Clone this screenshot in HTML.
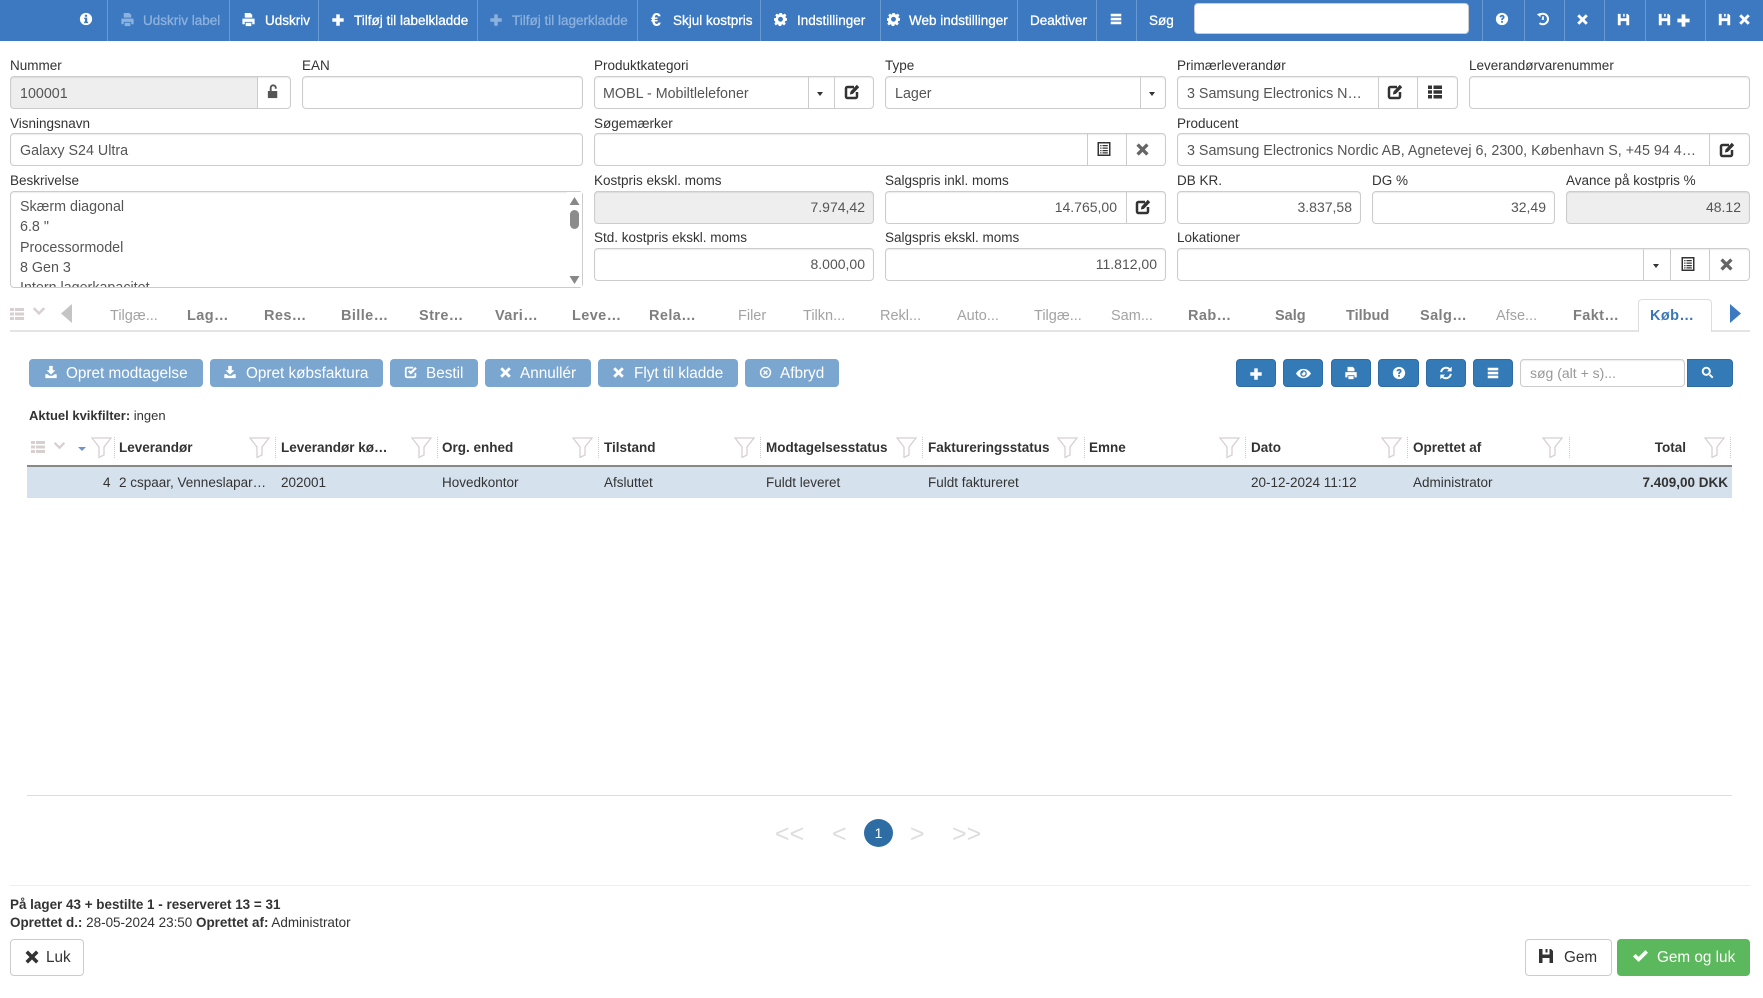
<!DOCTYPE html>
<html lang="da"><head><meta charset="utf-8"><title>Galaxy S24 Ultra</title>
<style>
*{box-sizing:border-box}
html,body{margin:0;padding:0;background:#fff}
body{width:1763px;height:998px;position:relative;overflow:hidden;font-family:"Liberation Sans",Arial,sans-serif;font-size:13.5px;color:#333}
.a,.t,.l,.b,.s,.sep,.btn,.rb,svg.a{position:absolute}
svg{fill:currentColor}
.t{white-space:nowrap;line-height:20px;height:20px}
.l{white-space:nowrap;line-height:20px;height:20px;font-size:13.5px;color:#333}
.b{height:33px;border:1px solid #ccc;border-radius:4px;box-shadow:inset 0 1px 1px rgba(0,0,0,.075);background:#fff;font-size:14.3px;color:#555;line-height:31px;padding:0 9px;white-space:nowrap;overflow:hidden}
.u{line-height:34px}
.r{text-align:right;padding-right:8px;font-size:14px}
.g{background:#eee}
.s{width:1px;background:#ccc}
.sep{top:0;width:1px;height:41px;background:#6a9ad2}
#top{position:absolute;left:0;top:0;width:1763px;height:41px;background:#3c79c1}
#top .t{color:#fff;top:11px;font-size:13.5px;-webkit-text-stroke:.3px #fff}
#top .d{color:#8db1dd;-webkit-text-stroke:.3px #8db1dd}
#top svg{color:#fff}
.tab{position:absolute;top:305px;font-size:14.5px;color:#a3a3a3;line-height:22px;white-space:nowrap}
.tab.k{font-weight:bold;color:#7f7f7f;letter-spacing:.4px}
.btn{top:359px;height:28px;background:#7ba6cf;border-radius:4px}
.bt{position:absolute;top:364px;color:#fff;font-size:15.3px;line-height:20px;white-space:nowrap}
.rb{top:359px;height:28px;background:#337ab7;border-radius:4px;border:1px solid #2e6da4}
.h{position:absolute;top:438px;font-weight:bold;font-size:13.5px;line-height:20px;white-space:nowrap;color:#333}
.c{position:absolute;top:473px;font-size:13.5px;line-height:20px;white-space:nowrap;color:#333}
.dot{position:absolute;top:437px;height:21px;width:0;border-left:1px dotted #c9c9c9}
.f{position:absolute;top:437px;width:21px;height:21px;fill:none;stroke:#d8d0d0;stroke-width:1.3}
.car{position:absolute;width:0;height:0;border-left:3.5px solid transparent;border-right:3.5px solid transparent;border-top:4.5px solid #333}
.pg{position:absolute;top:819px;font-size:25px;line-height:30px;color:#ddd;white-space:nowrap}
.ft{position:absolute;top:939px;height:37px;border-radius:4px;font-size:15.3px;line-height:35px;white-space:nowrap}
</style></head><body>
<svg width="0" height="0" style="position:absolute">
<defs>
<symbol id="info" viewBox="0 0 16 16"><path fill-rule="evenodd" d="M8 1a7 7 0 1 0 0 14A7 7 0 0 0 8 1zM6.7 3.2h2.6v2.2H6.700zM6 6.400h3.400v4.700h1v1.600H5.800v-1.600h1V8H6z"/></symbol>
<symbol id="q" viewBox="0 0 16 16"><path fill-rule="evenodd" d="M8 1a7 7 0 1 0 0 14A7 7 0 0 0 8 1zM5.200 6C5.200 4.300 6.600 3.300 8.100 3.300s2.800.9 2.800 2.500c0 1.900-1.900 2-1.900 3.300H7c0-2.200 1.800-2.300 1.800-3.300 0-.4-.3-.7-.7-.7-.5 0-.8.300-.8.900zM7 10.100h2v2.200H7z"/></symbol>
<symbol id="print" viewBox="0 0 16 16"><path d="M4 1h6l2 2v3H4zM1.500 7h13v6H12v-2.500H4V13H1.500zM5 11.500h6V15H5z"/></symbol>
<symbol id="plus" viewBox="0 0 16 16"><path d="M6 1.500h4V6h4.500v4H10v4.500H6V10H1.500V6H6z"/></symbol>
<symbol id="x" viewBox="0 0 16 16"><path d="M4 1.500 8 5.500l4-4L14.500 4l-4 4 4 4-2.500 2.500-4-4-4 4L1.500 12l4-4-4-4z"/></symbol>
<symbol id="cog" viewBox="0 0 16 16"><path fill-rule="evenodd" d="M6.500 0h3l.4 2.200 1.400.6 1.900-1.300 2.100 2.100-1.300 1.900.6 1.400L16 7.300v2.900l-2.200.4-.6 1.400 1.300 1.900-2.100 2.100-1.900-1.300-1.300.5-.4 2.200h-2.900l-.4-2.200-1.400-.5-1.900 1.300L.4 14l1.300-1.900-.6-1.400L0 10.200V7.300l2.200-.4.6-1.400L1.500 3.600l2.100-2.100 1.900 1.300 1-.6zM8 5.500a3 3 0 1 0 0 6 3 3 0 0 0 0-6z" transform="translate(0 -.8)"/></symbol>
<symbol id="bars" viewBox="0 0 16 16"><path d="M2 2h12v3H2zM2 6.500h12v3H2zM2 11h12v3H2z"/></symbol>
<symbol id="undo" viewBox="0 0 16 16"><path d="M5.500 1 5 6 1 2.500z"/><path d="M4 3.300A6 6 0 1 1 4 12.700" fill="none" stroke="currentColor" stroke-width="2.300"/><path d="M7 5h2v4H6.500V7.800H7z"/></symbol>
<symbol id="save" viewBox="0 0 16 16"><path fill-rule="evenodd" d="M1 1h12l2 2v12H1zM4.500 1v5.500h7V1h-2v3.500h-2V1zM4.500 10V15h7V10z"/></symbol>
<symbol id="edit" viewBox="0 0 16 16"><path d="M10 3H3.500A1.500 1.500 0 0 0 2 4.500v8A1.500 1.500 0 0 0 3.500 14h8a1.500 1.500 0 0 0 1.500-1.500V8" fill="none" stroke="currentColor" stroke-width="2.500"/><path d="M6.500 7.500 12.800.8l2.400 2.400-6.300 6.700-3 .6z"/></symbol>
<symbol id="thl" viewBox="0 0 16 16"><path d="M1 1.500h4v3.500H1zM6.500 1.500H15v3.500H6.500zM1 6.300h4v3.500H1zM6.500 6.300H15v3.500H6.500zM1 11h4v3.500H1zM6.500 11H15v3.500H6.500z"/></symbol>
<symbol id="la" viewBox="0 0 16 16"><path fill-rule="evenodd" d="M1.500 1h13v14h-13zM3 2.500v11h10v-11z"/><path d="M4.200 4h1.300v1.300H4.200zM6.500 4h5.300v1.300H6.500zM4.200 6.500h1.300v1.300H4.200zM6.500 6.500h5.300v1.300H6.500zM4.200 9h1.300v1.300H4.200zM6.500 9h5.300v1.300H6.500zM4.200 11.200h1.300v1.300H4.200zM6.500 11.200h5.300v1.300H6.500z"/></symbol>
<symbol id="lock" viewBox="0 0 16 16"><path d="M2 7.500h10V15H2z"/><path d="M5 7.500V4.200a2.700 2.700 0 0 1 5.400-.2v1" fill="none" stroke="currentColor" stroke-width="2"/></symbol>
<symbol id="dl" viewBox="0 0 16 16"><path d="M6 1h4v5h3L8 11 3 6h3zM1.500 10.500h2.700L6 12.300h4l1.800-1.800h2.700V15h-13z"/></symbol>
<symbol id="chk" viewBox="0 0 16 16"><path d="M10.500 3H3.500A1.500 1.500 0 0 0 2 4.500v8A1.500 1.500 0 0 0 3.500 14h8a1.500 1.500 0 0 0 1.500-1.500V9" fill="none" stroke="currentColor" stroke-width="2"/><path d="m4.500 7.500 1.800-1.700 1.500 1.500 5-5 1.800 1.800-6.800 6.800z"/></symbol>
<symbol id="ban" viewBox="0 0 16 16"><path fill-rule="evenodd" d="M8 1a7 7 0 1 0 0 14A7 7 0 0 0 8 1zm0 1.800a5.200 5.200 0 1 1 0 10.400A5.200 5.200 0 0 1 8 2.800z"/><path d="m6.200 5 1.800 1.800L9.800 5 11 6.200 9.200 8l1.800 1.800L9.800 11 8 9.200 6.200 11 5 9.800 6.800 8 5 6.200z"/></symbol>
<symbol id="eye" viewBox="0 0 16 16"><path fill-rule="evenodd" d="M0 8c2-3.300 4.800-5 8-5s6 1.700 8 5c-2 3.300-4.800 5-8 5S2 11.300 0 8zm8-3.500a3.500 3.500 0 1 0 0 7 3.500 3.500 0 0 0 0-7z"/><path d="M8 5.800a2.200 2.200 0 1 1-2.200 2.200c.6.300 1.700-.2 2.200-2.200z"/></symbol>
<symbol id="ref" viewBox="0 0 16 16"><path d="M2.500 7a5.600 5.600 0 0 1 9.500-3.300M13.500 9a5.600 5.600 0 0 1-9.500 3.300" fill="none" stroke="currentColor" stroke-width="2.200"/><path d="M14.500.8v5.400H9.100zM1.500 15.200V9.800h5.400z"/></symbol>
<symbol id="sr" viewBox="0 0 16 16"><circle cx="6.500" cy="6.500" r="4.400" fill="none" stroke="currentColor" stroke-width="2.400"/><path d="m9.800 11.500 1.700-1.700 3.800 3.800-1.700 1.700z"/></symbol>
<symbol id="ok" viewBox="0 0 16 16"><path d="m1 8.500 2.600-2.600 3 3 6.800-6.800L16 4.700 6.600 14z"/></symbol>
<symbol id="chev" viewBox="0 0 16 16"><path d="M1 4.500l2-2 5 5 5-5 2 2-7 7z"/></symbol>
<symbol id="list" viewBox="0 0 16 16"><path d="M1 2h4v3H1zM6 2h9v3H6zM1 6.500h4v3H1zM6 6.500h9v3H6zM1 11h4v3H1zM6 11h9v3H6z"/></symbol>
<symbol id="fn" viewBox="0 0 21 21"><path d="M1 1h19l-7 9v8l-5 2.500V10z"/></symbol>
</defs>
</svg>

<div id="top">
<i class="sep" style="left:107px"></i><i class="sep" style="left:229px"></i><i class="sep" style="left:318px"></i><i class="sep" style="left:477px"></i><i class="sep" style="left:637px"></i><i class="sep" style="left:760px"></i><i class="sep" style="left:880px"></i><i class="sep" style="left:1017px"></i><i class="sep" style="left:1096px"></i><i class="sep" style="left:1136px"></i><i class="sep" style="left:1482px"></i><i class="sep" style="left:1524px"></i><i class="sep" style="left:1564px"></i><i class="sep" style="left:1604px"></i><i class="sep" style="left:1645px"></i><i class="sep" style="left:1705px"></i>
<svg class="a" style="left:79px;top:12px;width:14px;height:14px"><use href="#info"/></svg>
<svg class="a" style="left:120px;top:12px;width:15px;height:15px;color:#8db1dd"><use href="#print"/></svg><span class="t d" style="left:143px">Udskriv label</span>
<svg class="a" style="left:241px;top:12px;width:15px;height:15px"><use href="#print"/></svg><span class="t" style="left:265px">Udskriv</span>
<svg class="a" style="left:331px;top:13px;width:14px;height:14px"><use href="#plus"/></svg><span class="t" style="left:354px">Tilføj til labelkladde</span>
<svg class="a" style="left:489px;top:13px;width:14px;height:14px;color:#8db1dd"><use href="#plus"/></svg><span class="t d" style="left:512px">Tilføj til lagerkladde</span>
<span class="t" style="left:651px;font-size:18px;font-weight:bold;top:10px;-webkit-text-stroke:0">€</span><span class="t" style="left:673px">Skjul kostpris</span>
<svg class="a" style="left:774px;top:13px;width:13px;height:13px"><use href="#cog"/></svg><span class="t" style="left:797px">Indstillinger</span>
<svg class="a" style="left:887px;top:13px;width:13px;height:13px"><use href="#cog"/></svg><span class="t" style="left:909px">Web indstillinger</span>
<span class="t" style="left:1030px">Deaktiver</span>
<svg class="a" style="left:1109px;top:12px;width:14px;height:14px"><use href="#bars"/></svg>
<span class="t" style="left:1149px">Søg</span>
<div class="a" style="left:1194px;top:3px;width:275px;height:31px;background:#fff;border:1px solid #ccc;border-radius:4px"></div>
<svg class="a" style="left:1495px;top:12px;width:14px;height:14px"><use href="#q"/></svg>
<svg class="a" style="left:1536px;top:12px;width:14px;height:14px"><use href="#undo"/></svg>
<svg class="a" style="left:1576px;top:13px;width:13px;height:13px"><use href="#x"/></svg>
<svg class="a" style="left:1617px;top:13px;width:13px;height:13px"><use href="#save"/></svg>
<svg class="a" style="left:1658px;top:13px;width:13px;height:13px"><use href="#save"/></svg><svg class="a" style="left:1676px;top:13px;width:15px;height:15px"><use href="#plus"/></svg>
<svg class="a" style="left:1718px;top:13px;width:13px;height:13px"><use href="#save"/></svg><svg class="a" style="left:1738px;top:13px;width:13px;height:13px"><use href="#x"/></svg>
</div>

<span class="l" style="left:10px;top:56px">Nummer</span>
<span class="l" style="left:302px;top:56px">EAN</span>
<span class="l" style="left:594px;top:56px">Produktkategori</span>
<span class="l" style="left:885px;top:56px">Type</span>
<span class="l" style="left:1177px;top:56px">Primærleverandør</span>
<span class="l" style="left:1469px;top:56px">Leverandørvarenummer</span>

<div class="b u" style="left:10px;top:76px;width:281px;background:linear-gradient(90deg,#eee 247px,#fff 247px)">100001</div><i class="s" style="left:257px;top:77px;height:31px"></i>
<svg class="a" style="left:266px;top:84px;width:15px;height:15px;color:#555"><use href="#lock"/></svg>
<div class="b" style="left:302px;top:76px;width:281px"></div>
<div class="b u" style="left:594px;top:76px;width:280px;padding-left:8px">MOBL - Mobiltlelefoner</div><i class="s" style="left:808px;top:77px;height:31px"></i><i class="s" style="left:834px;top:77px;height:31px"></i>
<i class="car" style="left:817px;top:92px"></i>
<svg class="a" style="left:844px;top:84px;width:16px;height:16px"><use href="#edit"/></svg>
<div class="b u" style="left:885px;top:76px;width:281px">Lager</div><i class="s" style="left:1140px;top:77px;height:31px"></i>
<i class="car" style="left:1149px;top:92px"></i>
<div class="b u" style="left:1177px;top:76px;width:281px">3 Samsung Electronics N…</div><i class="s" style="left:1378px;top:77px;height:31px"></i><i class="s" style="left:1417px;top:77px;height:31px"></i>
<svg class="a" style="left:1387px;top:84px;width:16px;height:16px"><use href="#edit"/></svg>
<svg class="a" style="left:1427px;top:84px;width:16px;height:16px"><use href="#thl"/></svg>
<div class="b" style="left:1469px;top:76px;width:281px"></div>

<span class="l" style="left:10px;top:114px">Visningsnavn</span>
<span class="l" style="left:594px;top:114px">Søgemærker</span>
<span class="l" style="left:1177px;top:114px">Producent</span>
<div class="b u" style="left:10px;top:133px;width:573px">Galaxy S24 Ultra</div>
<div class="b" style="left:594px;top:133px;width:572px"></div><i class="s" style="left:1087px;top:134px;height:31px"></i><i class="s" style="left:1126px;top:134px;height:31px"></i>
<svg class="a" style="left:1096px;top:141px;width:16px;height:16px"><use href="#la"/></svg>
<svg class="a" style="left:1135px;top:142px;width:15px;height:15px;color:#666"><use href="#x"/></svg>
<div class="b u" style="left:1177px;top:133px;width:573px">3 Samsung Electronics Nordic AB, Agnetevej 6, 2300, København S, +45 94 4…</div><i class="s" style="left:1709px;top:134px;height:31px"></i>
<svg class="a" style="left:1719px;top:142px;width:16px;height:16px"><use href="#edit"/></svg>

<span class="l" style="left:10px;top:171px">Beskrivelse</span>
<span class="l" style="left:594px;top:171px">Kostpris ekskl. moms</span>
<span class="l" style="left:885px;top:171px">Salgspris inkl. moms</span>
<span class="l" style="left:1177px;top:171px">DB KR.</span>
<span class="l" style="left:1372px;top:171px">DG %</span>
<span class="l" style="left:1566px;top:171px">Avance på kostpris %</span>

<div class="b" style="left:10px;top:191px;width:573px;height:97px;line-height:20.300px;padding-top:5px;white-space:pre-line">Skærm diagonal
6.8 "
Processormodel
8 Gen 3
Intern lagerkapacitet</div>
<div class="a" style="left:567px;top:192px;width:15px;height:95px;background:#fff"></div>
<svg class="a" style="left:569px;top:197px;width:11px;height:8px;color:#888" viewBox="0 0 11 8"><path d="M5.500 0 10.500 8H.5z"/></svg>
<div class="a" style="left:570px;top:210px;width:9px;height:19px;background:#8c8c8c;border-radius:5px"></div>
<svg class="a" style="left:569px;top:276px;width:11px;height:8px;color:#888" viewBox="0 0 11 8"><path d="M.5 0h10l-5 8z"/></svg>

<div class="b r g" style="left:594px;top:191px;width:280px">7.974,42</div>
<div class="b r" style="left:885px;top:191px;width:281px;padding-right:48px">14.765,00</div><i class="s" style="left:1126px;top:192px;height:31px"></i>
<svg class="a" style="left:1135px;top:199px;width:16px;height:16px"><use href="#edit"/></svg>
<div class="b r" style="left:1177px;top:191px;width:184px">3.837,58</div>
<div class="b r" style="left:1372px;top:191px;width:183px">32,49</div>
<div class="b r g" style="left:1566px;top:191px;width:184px">48.12</div>

<span class="l" style="left:594px;top:228px">Std. kostpris ekskl. moms</span>
<span class="l" style="left:885px;top:228px">Salgspris ekskl. moms</span>
<span class="l" style="left:1177px;top:228px">Lokationer</span>
<div class="b r" style="left:594px;top:248px;width:280px">8.000,00</div>
<div class="b r" style="left:885px;top:248px;width:281px">11.812,00</div>
<div class="b" style="left:1177px;top:248px;width:573px"></div><i class="s" style="left:1643px;top:249px;height:31px"></i><i class="s" style="left:1670px;top:249px;height:31px"></i><i class="s" style="left:1709px;top:249px;height:31px"></i>
<i class="car" style="left:1653px;top:264px"></i>
<svg class="a" style="left:1680px;top:256px;width:16px;height:16px"><use href="#la"/></svg>
<svg class="a" style="left:1719px;top:257px;width:15px;height:15px;color:#666"><use href="#x"/></svg>

<div class="a" style="left:10px;top:330px;width:1740px;height:2px;background:#e4e4e4"></div>
<svg class="a" style="left:9px;top:306px;width:16px;height:16px;color:#d8d0d0"><use href="#list"/></svg>
<svg class="a" style="left:32px;top:305px;width:14px;height:14px;color:#d8d0d0"><use href="#chev"/></svg>
<svg class="a" style="left:61px;top:304px;width:11px;height:19px;color:#c4c4c4" viewBox="0 0 11 19"><path d="M11 0v19L0 9.500z"/></svg>
<span class="tab" style="left:110px">Tilgæ...</span>
<span class="tab k" style="left:187px">Lag…</span>
<span class="tab k" style="left:264px">Res…</span>
<span class="tab k" style="left:341px">Bille…</span>
<span class="tab k" style="left:419px">Stre…</span>
<span class="tab k" style="left:495px">Vari…</span>
<span class="tab k" style="left:572px">Leve…</span>
<span class="tab k" style="left:649px">Rela…</span>
<span class="tab" style="left:738px">Filer</span>
<span class="tab" style="left:803px">Tilkn...</span>
<span class="tab" style="left:880px">Rekl...</span>
<span class="tab" style="left:957px">Auto...</span>
<span class="tab" style="left:1034px">Tilgæ...</span>
<span class="tab" style="left:1111px">Sam...</span>
<span class="tab k" style="left:1188px">Rab…</span>
<span class="tab k" style="left:1275px;letter-spacing:0">Salg</span>
<span class="tab k" style="left:1346px;letter-spacing:0">Tilbud</span>
<span class="tab k" style="left:1420px">Salg…</span>
<span class="tab" style="left:1496px">Afse...</span>
<span class="tab k" style="left:1573px">Fakt…</span>
<div class="a" style="left:1638px;top:299px;width:74px;height:33px;background:#fff;border:1px solid #ddd;border-bottom:0;border-radius:4px 4px 0 0"></div>
<span class="tab k" style="left:1650px;color:#3a77b4">Køb…</span>
<svg class="a" style="left:1730px;top:304px;width:11px;height:19px;color:#3c79c1" viewBox="0 0 11 19"><path d="M0 0v19l11-9.500z"/></svg>

<div class="btn" style="left:29px;width:174px"></div><svg class="a" style="left:44px;top:365px;width:14px;height:14px;color:#fff"><use href="#dl"/></svg><span class="bt" style="left:66px">Opret modtagelse</span>
<div class="btn" style="left:210px;width:173px"></div><svg class="a" style="left:223px;top:365px;width:14px;height:14px;color:#fff"><use href="#dl"/></svg><span class="bt" style="left:246px">Opret købsfaktura</span>
<div class="btn" style="left:390px;width:88px"></div><svg class="a" style="left:404px;top:365px;width:14px;height:14px;color:#fff"><use href="#chk"/></svg><span class="bt" style="left:426px">Bestil</span>
<div class="btn" style="left:485px;width:106px"></div><svg class="a" style="left:499px;top:366px;width:13px;height:13px;color:#fff"><use href="#x"/></svg><span class="bt" style="left:520px">Annullér</span>
<div class="btn" style="left:598px;width:140px"></div><svg class="a" style="left:612px;top:366px;width:13px;height:13px;color:#fff"><use href="#x"/></svg><span class="bt" style="left:634px">Flyt til kladde</span>
<div class="btn" style="left:745px;width:94px"></div><svg class="a" style="left:759px;top:366px;width:13px;height:13px;color:#fff"><use href="#ban"/></svg><span class="bt" style="left:780px">Afbryd</span>

<div class="rb" style="left:1236px;width:40px"></div><svg class="a" style="left:1249px;top:367px;width:14px;height:14px;color:#fff"><use href="#plus"/></svg>
<div class="rb" style="left:1283px;width:40px"></div><svg class="a" style="left:1296px;top:366px;width:15px;height:15px;color:#fff"><use href="#eye"/></svg>
<div class="rb" style="left:1331px;width:40px"></div><svg class="a" style="left:1344px;top:366px;width:14px;height:14px;color:#fff"><use href="#print"/></svg>
<div class="rb" style="left:1378px;width:41px"></div><svg class="a" style="left:1392px;top:366px;width:14px;height:14px;color:#fff"><use href="#q"/></svg>
<div class="rb" style="left:1426px;width:40px"></div><svg class="a" style="left:1439px;top:366px;width:14px;height:14px;color:#fff"><use href="#ref"/></svg>
<div class="rb" style="left:1473px;width:40px"></div><svg class="a" style="left:1486px;top:366px;width:14px;height:14px;color:#fff"><use href="#bars"/></svg>
<div class="b" style="left:1520px;top:359px;width:165px;height:28px;line-height:26px;color:#999;font-size:14px">søg (alt + s)...</div>
<div class="rb" style="left:1687px;width:46px;border-radius:0 4px 4px 0"></div><svg class="a" style="left:1701px;top:366px;width:13px;height:13px;color:#fff"><use href="#sr"/></svg>

<span class="t" style="left:29px;top:406px;font-size:13px"><b>Aktuel kvikfilter:</b> ingen</span>

<svg class="a" style="left:30px;top:439px;width:16px;height:16px;color:#d8d0d0"><use href="#list"/></svg>
<svg class="a" style="left:53px;top:440px;width:13px;height:13px;color:#d8d0d0"><use href="#chev"/></svg>
<i class="car" style="left:78px;top:447px;border-top-color:#6f94cc;border-left-width:4px;border-right-width:4px"></i>
<svg class="f" style="left:91px"><use href="#fn"/></svg><svg class="f" style="left:249px"><use href="#fn"/></svg><svg class="f" style="left:411px"><use href="#fn"/></svg><svg class="f" style="left:572px"><use href="#fn"/></svg><svg class="f" style="left:734px"><use href="#fn"/></svg><svg class="f" style="left:896px"><use href="#fn"/></svg><svg class="f" style="left:1057px"><use href="#fn"/></svg><svg class="f" style="left:1219px"><use href="#fn"/></svg><svg class="f" style="left:1381px"><use href="#fn"/></svg><svg class="f" style="left:1542px"><use href="#fn"/></svg><svg class="f" style="left:1704px"><use href="#fn"/></svg>
<i class="dot" style="left:114px"></i><i class="dot" style="left:275px"></i><i class="dot" style="left:437px"></i><i class="dot" style="left:598px"></i><i class="dot" style="left:760px"></i><i class="dot" style="left:922px"></i><i class="dot" style="left:1084px"></i><i class="dot" style="left:1245px"></i><i class="dot" style="left:1407px"></i><i class="dot" style="left:1569px"></i><i class="dot" style="left:1730px"></i>
<span class="h" style="left:119px">Leverandør</span>
<span class="h" style="left:281px">Leverandør kø…</span>
<span class="h" style="left:442px">Org. enhed</span>
<span class="h" style="left:604px">Tilstand</span>
<span class="h" style="left:766px">Modtagelsesstatus</span>
<span class="h" style="left:928px">Faktureringsstatus</span>
<span class="h" style="left:1089px">Emne</span>
<span class="h" style="left:1251px">Dato</span>
<span class="h" style="left:1413px">Oprettet af</span>
<span class="h" style="right:77px">Total</span>

<div class="a" style="left:27px;top:465px;width:1705px;height:33px;background:#d5e1ed;border-top:2px solid #888;border-bottom:1px solid #ddd"></div>
<span class="c" style="left:103px">4</span>
<span class="c" style="left:119px">2 cspaar, Venneslapar…</span>
<span class="c" style="left:281px">202001</span>
<span class="c" style="left:442px">Hovedkontor</span>
<span class="c" style="left:604px">Afsluttet</span>
<span class="c" style="left:766px">Fuldt leveret</span>
<span class="c" style="left:928px">Fuldt faktureret</span>
<span class="c" style="left:1251px">20-12-2024 11:12</span>
<span class="c" style="left:1413px">Administrator</span>
<span class="c" style="right:35px;font-weight:bold">7.409,00 DKK</span>

<div class="a" style="left:27px;top:795px;width:1705px;height:1px;background:#ddd"></div>
<span class="pg" style="left:775px">&lt;&lt;</span>
<span class="pg" style="left:832px">&lt;</span>
<div class="a" style="left:864px;top:819px;width:29px;height:28px;border-radius:50%;background:#2e6da4;color:#fff;text-align:center;font-size:14px;line-height:28px">1</div>
<span class="pg" style="left:910px">&gt;</span>
<span class="pg" style="left:952px">&gt;&gt;</span>

<div class="a" style="left:10px;top:885px;width:1740px;height:1px;background:#eee"></div>
<span class="t" style="left:10px;top:895px;font-weight:bold;font-size:13.45px">På lager 43 + bestilte 1 - reserveret 13 = 31</span>
<span class="t" style="left:10px;top:913px;font-size:13.45px"><b>Oprettet d.:</b> 28-05-2024 23:50 <b>Oprettet af:</b> Administrator</span>

<div class="ft" style="left:10px;width:74px;border:1px solid #ccc;background:#fff;padding-left:35px;color:#333">Luk</div>
<svg class="a" style="left:24px;top:949px;width:16px;height:16px;color:#333"><use href="#x"/></svg>
<div class="ft" style="left:1525px;width:87px;border:1px solid #ccc;background:#fff;padding-left:38px;color:#333">Gem</div>
<svg class="a" style="left:1538px;top:948px;width:16px;height:16px;color:#333"><use href="#save"/></svg>
<div class="ft" style="left:1617px;width:133px;background:#5cb85c;color:#fff;padding-left:40px;line-height:37px">Gem og luk</div>
<svg class="a" style="left:1632px;top:948px;width:16px;height:16px;color:#fff"><use href="#ok"/></svg>
</body></html>
